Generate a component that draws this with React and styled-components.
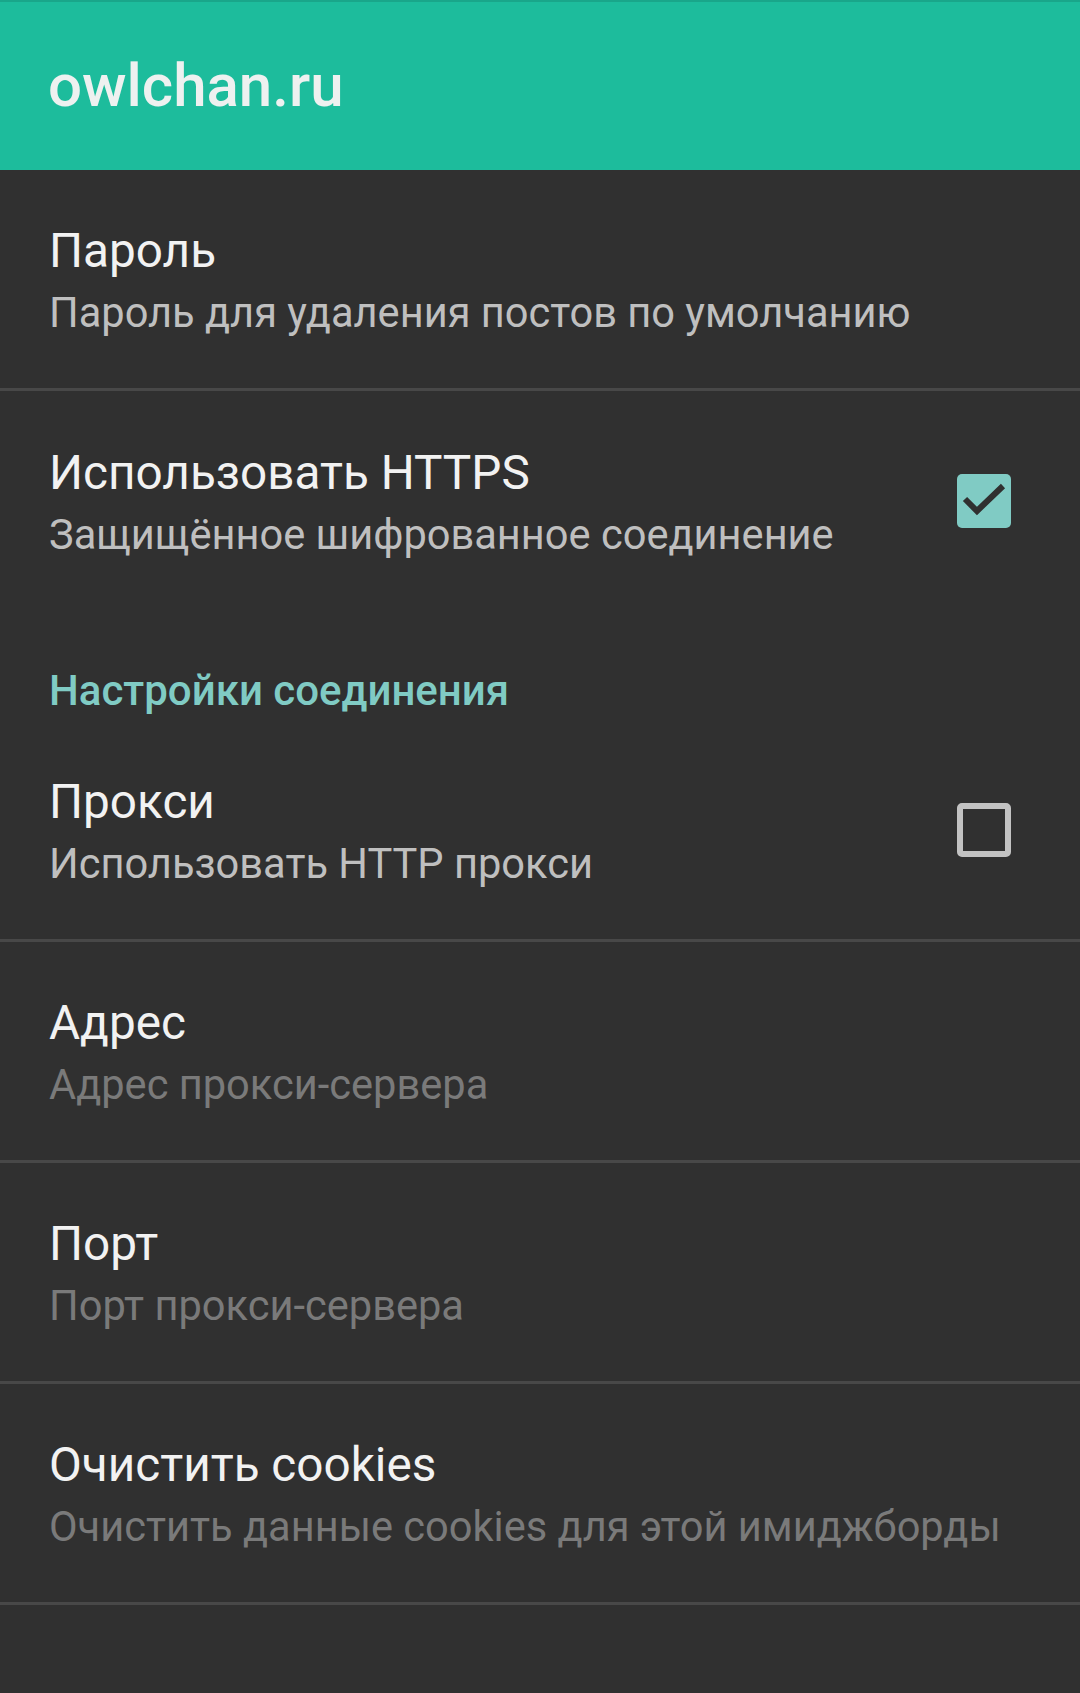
import styled, { createGlobalStyle } from 'styled-components';

const GlobalStyle = createGlobalStyle`
  html, body {
    margin: 0;
    padding: 0;
    background: #303030;
  }
  body {
    font-family: Roboto, 'Noto Sans', sans-serif;
  }
`;

const Screen = styled.div`
  width: 1080px;
  min-height: 1693px;
  background: #303030;
`;

const Toolbar = styled.header`
  height: 168px;
  border-top: 2px solid #19a68a;
  background: #1dbc9c;
  display: flex;
  align-items: center;
  padding-left: 48px;
  h1 {
    margin: 0 0 2px;
    font-family: Roboto, sans-serif;
    font-weight: 500;
    font-size: 60px;
    color: #eef1f0;
  }
`;

const Row = styled.div`
  display: flex;
  align-items: center;
  box-sizing: border-box;
  padding: 0 69px 0 49px;
  border-bottom: ${(p) => (p.$divider ? '3px solid #484848' : 'none')};
  height: ${(p) => (p.$divider ? '221px' : '219px')};
`;

const Texts = styled.div`
  flex: 1;
  display: flex;
  flex-direction: column;
`;

const Title = styled.div`
  font-size: 47.7px;
  line-height: 60px;
  color: #f2f2f2;
  margin-top: 6px;
`;

const Summary = styled.div`
  font-size: 41.6px;
  line-height: 60px;
  margin-top: 2px;
  color: ${(p) => (p.$disabled ? '#7a7a7a' : '#bfbfbf')};
`;

const Category = styled.div`
  height: 111px;
  box-sizing: border-box;
  padding: 56px 0 0 49px;
  font-size: 42px;
  font-weight: 500;
  line-height: 50px;
  color: #80cbc4;
`;

const Box = styled.div`
  width: 54px;
  height: 54px;
  box-sizing: border-box;
  border-radius: 5px;
  background: ${(p) => (p.$checked ? '#80cbc4' : 'transparent')};
  border: ${(p) => (p.$checked ? 'none' : '6px solid #c2c2c2')};
  display: flex;
  align-items: center;
  justify-content: center;
  svg {
    display: block;
  }
`;

const Checkbox = ({ checked }) => (
  <Box $checked={checked}>
    {checked && (
      <svg width="54" height="54" viewBox="0 0 54 54">
        <path d="M8 25 L20 37 L46 12" fill="none" stroke="#303030" strokeWidth="6" />
      </svg>
    )}
  </Box>
);

const Pref = ({ title, summary, disabled, divider, checkbox }) => (
  <Row $divider={divider}>
    <Texts>
      <Title>{title}</Title>
      <Summary $disabled={disabled}>{summary}</Summary>
    </Texts>
    {checkbox !== undefined && <Checkbox checked={checkbox} />}
  </Row>
);

export default function App() {
  return (
    <Screen>
      <GlobalStyle />
      <Toolbar>
        <h1>owlchan.ru</h1>
      </Toolbar>
      <Pref title="Пароль" summary="Пароль для удаления постов по умолчанию" divider />
      <Pref title="Использовать HTTPS" summary="Защищённое шифрованное соединение" checkbox={true} />
      <Category>Настройки соединения</Category>
      <Pref title="Прокси" summary="Использовать HTTP прокси" checkbox={false} divider />
      <Pref title="Адрес" summary="Адрес прокси-сервера" disabled divider />
      <Pref title="Порт" summary="Порт прокси-сервера" disabled divider />
      <Pref title="Очистить cookies" summary="Очистить данные cookies для этой имиджборды" disabled divider />
    </Screen>
  );
}
